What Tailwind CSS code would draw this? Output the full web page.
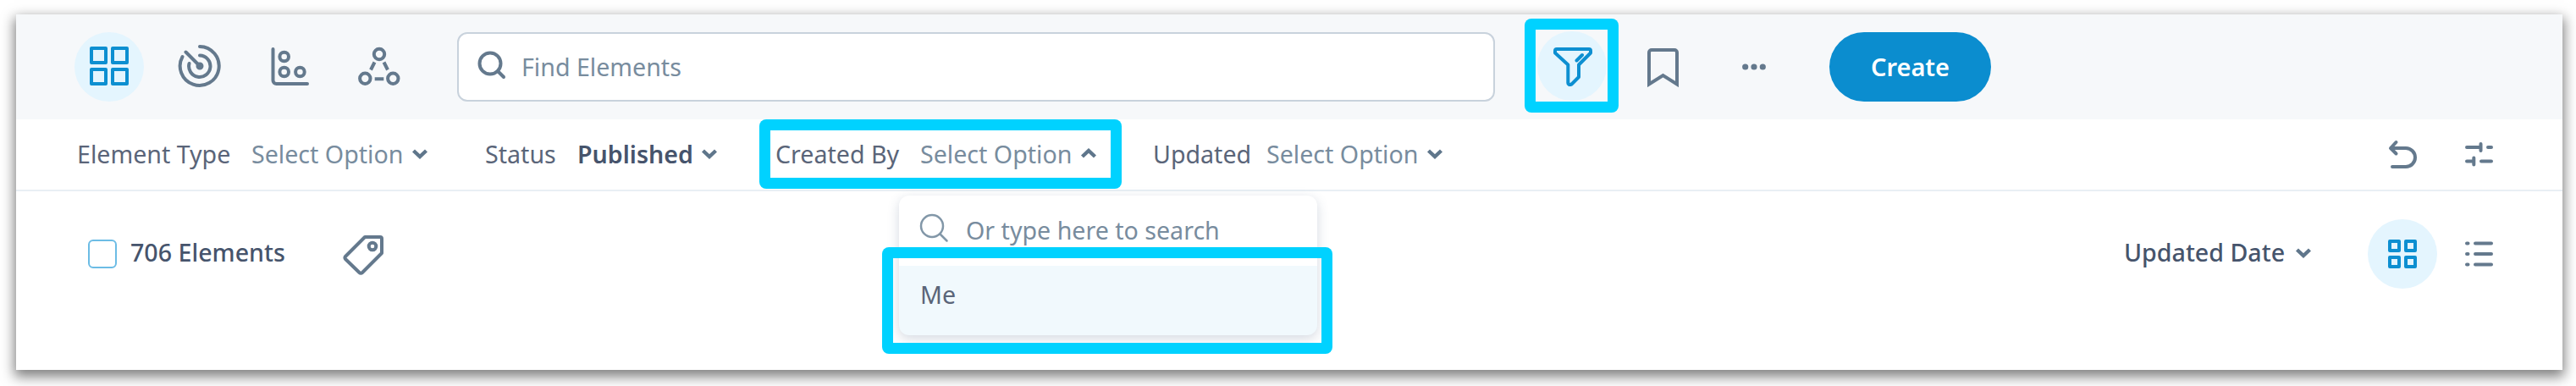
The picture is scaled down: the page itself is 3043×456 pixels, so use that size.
<!DOCTYPE html>
<html lang="en">
<head>
<meta charset="utf-8">
<title>Elements</title>
<script src="https://cdn.jsdelivr.net/npm/@tailwindcss/browser@4"></script>
</head>
<body class="w-[3043px] h-[456px] overflow-hidden bg-white pt-[17px] pl-[19px] font-['Noto_Sans',sans-serif] text-[28.6px] leading-10 text-[#5a6579]">
<svg class="hidden">
  <symbol id="down" viewBox="0 0 20 13"><path d="M2.500 3 10 10l7.500-7" fill="none" stroke="#5f768b" stroke-width="4.400"/></symbol>
  <symbol id="grid" viewBox="0 0 46 46"><path d="M2 2h17v17H2zM27 2h17v17H27zM2 27h17v17H2zM27 27h17v17H27z" fill="none" stroke="#0d8fd1" stroke-width="4" stroke-linejoin="round"/></symbol>
</svg>
<main class="relative w-[3008px] h-[420px] bg-white shadow-[0_6px_14px_2px_rgba(0,0,0,0.5)] whitespace-nowrap">

  <header class="flex items-center h-[124px] bg-[#f6f8fa]">
    <div class="ml-[69px] size-[82px] rounded-full bg-[#e4f5fe] flex items-center justify-center"><svg class="w-[46px] h-[46px] -mt-[2px]"><use href="#grid"/></svg></div>
    <svg class="ml-[40px] -mt-[2px] size-[52px]" viewBox="0 0 52 52" fill="none" stroke="#64798d" stroke-width="4" stroke-linecap="round"><path d="M26 3a23 23 0 1 1-20.500 12M26 13.500a12.700 12.700 0 1 1-12.500 9.500M9.500 9.500l16.500 16.500"/><circle cx="26" cy="26" r="2.500" fill="#64798d"/></svg>
    <svg class="ml-[57px] w-[48px] h-[48px]" viewBox="0 0 48 48" fill="none" stroke="#64798d" stroke-width="4" stroke-linecap="round"><path d="M3.500 3v37a4 4 0 0 0 4 4H44"/><circle cx="16.700" cy="12" r="5.300"/><circle cx="16.700" cy="30" r="5.300"/><circle cx="35.400" cy="30" r="5.300"/></svg>
    <svg class="ml-[55px] w-[52px] h-[48px]" viewBox="0 0 52 48" fill="none" stroke="#64798d" stroke-width="4"><circle cx="26" cy="9" r="6.200"/><circle cx="9.300" cy="37.700" r="6.200"/><circle cx="42.300" cy="37.700" r="6.200"/><path d="M20.500 18.500l-4.500 9M31.500 18.500l4.500 9M20.700 38.300h10.600"/></svg>
    <div class="ml-[66px] w-[1226px] h-[82px] rounded-xl border-2 border-[#c8d2dc] bg-white flex items-center text-[#788c9e]">
      <svg class="ml-[22px] -mt-1 size-[34px]" viewBox="0 0 34 34" fill="none" stroke="#64798d" stroke-width="4" stroke-linecap="round"><circle cx="15" cy="15" r="12.500"/><path d="M24 24l7 7"/></svg>
      <span class="ml-[18px]">Find Elements</span>
    </div>
    <div class="ml-[35px] w-[111px] h-[111px] -mt-[3px] rounded-lg bg-[#00d2ff] p-[13px]">
      <div class="size-[85px] bg-[#f6f8fa] flex items-center justify-center"><div class="size-[82px] rounded-full bg-[#e4f5fe] flex items-center justify-center">
        <svg class="size-[46px] mt-[3px] ml-[2px]" viewBox="0 0 46 46" fill="none" stroke="#0d8fd1" stroke-width="4" stroke-linecap="round" stroke-linejoin="round"><path d="M4 2h38a2 2 0 0 1 2 2v2.500L30 20.500V35l-8.500 8.500q-4.200 1.500-4.200-1.500V20.500L2 6.500V4a2 2 0 0 1 2-2zM34 9l-6.500 6.500"/></svg>
      </div></div>
    </div>
    <svg class="ml-[34px] w-[37px] mt-px h-[46px]" viewBox="0 0 37 46" fill="none" stroke="#64798d" stroke-width="4"><path d="M2 42.500V5a3 3 0 0 1 3-3h27a3 3 0 0 1 3 3v37.500L18.500 32z"/></svg>
    <svg class="ml-[74px] w-[30px] h-[8px]" viewBox="0 0 30 8" fill="#64798d"><circle cx="4.700" cy="4" r="3.600"/><circle cx="15" cy="4" r="3.600"/><circle cx="25.300" cy="4" r="3.600"/></svg>
    <button class="ml-[74px] w-[191px] h-[82px] rounded-full bg-[#0b8dcf] text-white text-[29px] font-semibold">Create</button>
  </header>

  <section class="flex items-center h-[85px] pb-[2px] border-b-2 border-[#e9eff4]">
    <span class="ml-[72px] w-[206px]">Element Type</span>
    <span class="w-[189px] text-[#788c9e]">Select Option</span>
    <svg class="w-[20px] h-[13px]"><use href="#down"/></svg>
    <span class="ml-[67px] w-[109px]">Status</span>
    <span class="w-[146px] font-semibold text-[#46546c]">Published</span>
    <svg class="w-[20px] h-[13px]"><use href="#down"/></svg>
    <span class="ml-[68px] w-[171px]">Created By</span>
    <span class="w-[189px] text-[#788c9e]">Select Option</span>
    <svg class="w-[20px] h-[13px] rotate-180"><use href="#down"/></svg>
    <span class="ml-[66px] w-[134px]">Updated</span>
    <span class="w-[189px] text-[#788c9e]">Select Option</span>
    <svg class="w-[20px] h-[13px]"><use href="#down"/></svg>
    <svg class="ml-auto mt-[2px] w-[36px] h-[36px]" viewBox="0 0 36 36" fill="none" stroke="#64798d" stroke-width="4" stroke-linecap="round" stroke-linejoin="round"><path d="M9.500 3 3 10 9.500 16.500M4 10h17a11 11 0 0 1 0 22H5"/></svg>
    <svg class="ml-[54px] mr-[80px] mt-[2px] w-[36px] h-[32px]" viewBox="0 0 36 32" fill="none" stroke="#64798d" stroke-width="4" stroke-linecap="round"><path d="M3 7h16M19.500 3v8M28 7h4M3 23.500h8M11.300 19.500v8M20 23.500h12"/></svg>
  </section>

  <section class="flex items-center h-[148px] text-[#46546c] font-medium">
    <span class="ml-[85px] size-[34px] rounded-md border-2 border-[#6cbce5]"></span>
    <span class="ml-[16px] -mt-[4px] w-[184px]">706 Elements</span>
    <svg class="ml-[66px] mt-[2px] w-[50px] h-[50px]" viewBox="0 0 50 50" fill="none" stroke="#64798d" stroke-width="4" stroke-linejoin="round"><path d="M27 4h18a2 2 0 0 1 2 2v17L24 46a2.500 2.500 0 0 1-3.500 0L4 30a2.500 2.500 0 0 1 0-3z"/><circle cx="36" cy="15" r="4.300"/></svg>
    <span class="ml-auto -mt-[5px] w-[202px]">Updated Date</span>
    <svg class="-mt-[4px] w-[20px] h-[13px]"><use href="#down"/></svg>
    <div class="ml-[66px] size-[82px] rounded-full bg-[#e4f5fe] flex items-center justify-center"><svg class="w-[34px] h-[34px]" viewBox="0 0 34 34" fill="none" stroke="#0d8fd1" stroke-width="4" stroke-linejoin="round"><path d="M2 2h11v11H2zM21 2h11v11H21zM2 21h11v11H2zM21 21h11v11H21z"/></svg></div>
    <svg class="ml-[31px] mr-[81px] w-[36px] h-[32px]" viewBox="0 0 36 32" fill="none" stroke="#64798d" stroke-width="4" stroke-linecap="round"><path d="M4 3.500h1.500M4 16h1.500M4 28.500h1.500M14 3.500h19M14 16h19M14 28.500h19"/></svg>
  </section>

  <!-- Created By menu -->
  <div class="absolute left-[1043px] top-[214px] w-[494px] h-[165px] rounded-xl overflow-hidden bg-white flex flex-col">
    <div class="h-[83px] flex items-center text-[#788c9e]">
      <svg class="ml-[24px] -mt-[6px] size-[35px]" viewBox="0 0 35 35" fill="none" stroke="#8297a8" stroke-width="2.500" stroke-linecap="round"><circle cx="15" cy="15" r="13"/><path d="M24.500 24.500l8 8"/></svg>
      <span class="ml-[20px] -mt-[2px]">Or type here to search</span>
    </div>
    <div class="h-[82px] pb-[14px] pl-[25px] flex items-center bg-[#f1f9fd]">Me</div>
  </div>
  <div class="absolute left-[1043px] top-[214px] w-[494px] h-[165px] rounded-xl shadow-[0_4px_14px_rgba(60,80,120,0.22)]"></div>

  <!-- Highlight frames -->
  <div class="absolute left-[878px] top-[124px] w-[428px] h-[82px] rounded-lg overflow-hidden"><div class="size-full border-[13px] border-[#00d2ff]"></div></div>
  <div class="absolute left-[1023px] top-[275px] w-[532px] h-[126px] rounded-lg overflow-hidden"><div class="size-full border-[13px] border-[#00d2ff]"></div></div>
</main>
</body>
</html>
